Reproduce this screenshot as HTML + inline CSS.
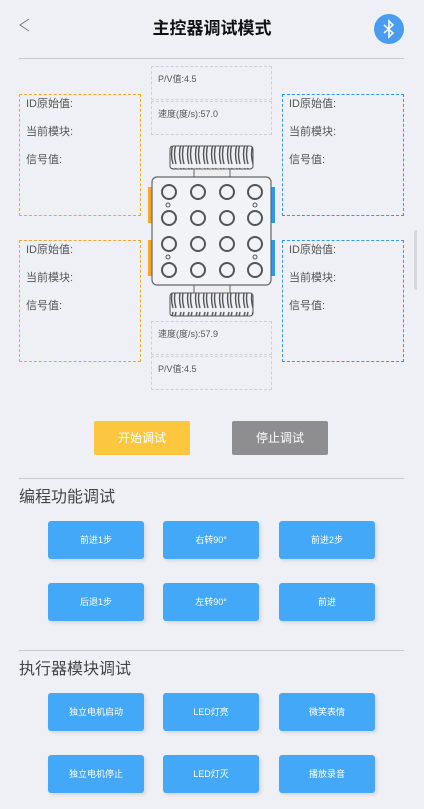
<!DOCTYPE html>
<html><head><meta charset="utf-8"><style>
*{margin:0;padding:0;box-sizing:border-box}
body{width:424px;height:809px;background:#eef0f5;font-family:"Liberation Sans","Noto Sans CJK SC",sans-serif;position:relative;overflow:hidden;color:#444}
.a{position:absolute}
.title{left:0;width:424px;top:14px;text-align:center;font-size:17px;font-weight:bold;color:#111}
.line{left:19px;width:385px;height:1px;background:#c8c8cc}
.box{width:122px;height:122px;border:1px dashed;font-size:11px;color:#555;padding:2px 6px}
.box div{height:28px;line-height:14px}
.c{left:151px;width:121px;height:34px;border:1px dashed #d0d0d4;font-size:9px;color:#555;padding:5px 6px}
.btn{width:96px;height:34px;color:#fff;font-size:12px;text-align:center;line-height:34px;border-radius:2px}
.b{width:96px;height:38px;background:#44a8f8;color:#fff;font-size:9px;text-align:center;line-height:38px;border-radius:3px;box-shadow:2px 2px 3px rgba(0,0,0,.1)}
.h{left:19px;font-size:16px;color:#444}
</style></head><body>
<svg class="a" style="left:18px;top:17px" width="14" height="16" viewBox="0 0 14 16"><path d="M11 2 L2 8 L11 14" fill="none" stroke="#777" stroke-width="1"/></svg>
<div class="a title">主控器调试模式</div>
<div class="a" style="left:374px;top:14px;width:30px;height:30px;border-radius:50%;background:#4a9cf0">
<svg width="30" height="30" viewBox="0 0 30 30"><path d="M10 11 L19 19 L15 23 L15 7 L19 11 L10 19" fill="none" stroke="#fff" stroke-width="1.6"/></svg></div>
<div class="a line" style="top:58px"></div>

<div class="a box" style="left:19px;top:94px;border-color:#f5a623"><div>ID原始值:</div><div>当前模块:</div><div>信号值:</div></div>
<div class="a box" style="left:19px;top:240px;border-color:#f5a623"><div>ID原始值:</div><div>当前模块:</div><div>信号值:</div></div>
<div class="a box" style="left:282px;top:94px;border-color:#2d9ae8"><div>ID原始值:</div><div>当前模块:</div><div>信号值:</div></div>
<div class="a box" style="left:282px;top:240px;border-color:#2d9ae8"><div>ID原始值:</div><div>当前模块:</div><div>信号值:</div></div>

<div class="a c" style="top:66px">P/V值:4.5</div>
<div class="a c" style="top:101px">速度(度/s):57.0</div>
<div class="a c" style="top:321px">速度(度/s):57.9</div>
<div class="a c" style="top:356px">P/V值:4.5</div>

<svg class="a" style="left:146px;top:142px" width="132" height="178" viewBox="0 0 132 178">
<defs><pattern id="w" width="8" height="24" patternUnits="userSpaceOnUse"><path d="M3 2 Q0 12 3 22 M6 2 Q3 12 6 22" stroke="#555" stroke-width="1.4" fill="none"/></pattern></defs>
<rect x="24" y="4" width="83" height="23" rx="3" fill="url(#w)" stroke="#555"/>
<rect x="48" y="27" width="36" height="8" fill="#eee" stroke="#666"/>
<rect x="24" y="151" width="83" height="23" rx="3" fill="url(#w)" stroke="#555"/>
<rect x="48" y="143" width="36" height="8" fill="#eee" stroke="#666"/>
<rect x="2" y="45" width="5" height="36" fill="#f5a623"/><rect x="2" y="98" width="5" height="36" fill="#f5a623"/>
<rect x="124" y="45" width="5" height="36" fill="#2d9ae8"/><rect x="124" y="98" width="5" height="36" fill="#2d9ae8"/>
<rect x="6" y="35" width="119" height="108" rx="5" fill="#f2f3f6" stroke="#666" stroke-width="1.2"/>
<g fill="none" stroke="#555" stroke-width="2">
<circle cx="23" cy="50" r="7"/><circle cx="52" cy="50" r="7"/><circle cx="81" cy="50" r="7"/><circle cx="109" cy="50" r="7"/>
<circle cx="23" cy="76" r="7"/><circle cx="52" cy="76" r="7"/><circle cx="81" cy="76" r="7"/><circle cx="109" cy="76" r="7"/>
<circle cx="23" cy="102" r="7"/><circle cx="52" cy="102" r="7"/><circle cx="81" cy="102" r="7"/><circle cx="109" cy="102" r="7"/>
<circle cx="23" cy="128" r="7"/><circle cx="52" cy="128" r="7"/><circle cx="81" cy="128" r="7"/><circle cx="109" cy="128" r="7"/>
</g>
<g fill="none" stroke="#555" stroke-width="1"><circle cx="22" cy="63" r="2"/><circle cx="109" cy="63" r="2"/><circle cx="22" cy="115" r="2"/><circle cx="109" cy="115" r="2"/></g>
</svg>

<div class="a" style="left:414px;top:230px;width:3px;height:60px;background:#d8d8dc;border-radius:2px"></div>

<div class="a btn" style="left:94px;top:421px;background:#fcc73e">开始调试</div>
<div class="a btn" style="left:232px;top:421px;background:#8e8e90">停止调试</div>
<div class="a line" style="top:478px"></div>
<div class="a h" style="top:483px">编程功能调试</div>
<div class="a b" style="left:48px;top:521px">前进1步</div>
<div class="a b" style="left:163px;top:521px">右转90°</div>
<div class="a b" style="left:279px;top:521px">前进2步</div>
<div class="a b" style="left:48px;top:583px">后退1步</div>
<div class="a b" style="left:163px;top:583px">左转90°</div>
<div class="a b" style="left:279px;top:583px">前进</div>
<div class="a line" style="top:650px"></div>
<div class="a h" style="top:655px">执行器模块调试</div>
<div class="a b" style="left:48px;top:693px">独立电机启动</div>
<div class="a b" style="left:163px;top:693px">LED灯亮</div>
<div class="a b" style="left:279px;top:693px">微笑表情</div>
<div class="a b" style="left:48px;top:755px">独立电机停止</div>
<div class="a b" style="left:163px;top:755px">LED灯灭</div>
<div class="a b" style="left:279px;top:755px">播放录音</div>
</body></html>
